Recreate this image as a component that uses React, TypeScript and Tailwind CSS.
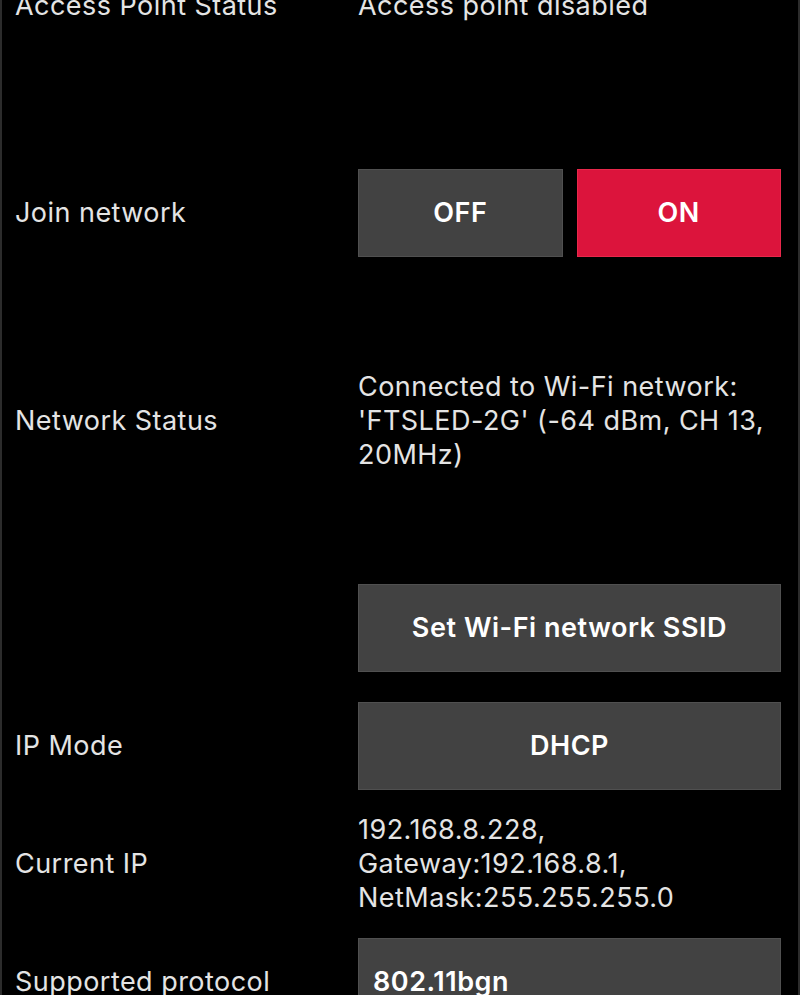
import React from "react";

const FONT = { fontFamily: "Inter, Roboto, 'Noto Sans', sans-serif" };

function Row({ label, children, tall }: { label?: string; children: React.ReactNode; tall?: boolean }) {
  return (
    <div className={`grid grid-cols-[343px_1fr] items-center py-[8px] ${tall ? "h-[297px]" : "min-h-[118px]"}`}>
      <div className="text-[27px] leading-[34px] tracking-[0.017em] text-[#e4e4e4]">{label}</div>
      <div>{children}</div>
    </div>
  );
}

function Btn({ children, red, left }: { children: React.ReactNode; red?: boolean; left?: boolean }) {
  return (
    <button
      type="button"
      className={`flex h-[88px] w-full items-center border text-[27px] font-semibold tracking-[0.02em] text-white ${
        left ? "justify-start pl-[14px]" : "justify-center"
      } ${red ? "border-[#e8284b] bg-[#dc143c]" : "border-[#505050] bg-[#424242]"}`}
    >
      {children}
    </button>
  );
}

export default function App() {
  return (
    <div className="h-[995px] w-[800px] overflow-hidden border-x-2 border-[#2c2c2c] bg-black" style={FONT}>
      <div className="-mt-[142px] pl-[13px] pr-[17px]">
        <div className="h-[296px] grid grid-cols-[343px_1fr] items-center py-[8px] text-[27px] leading-[34px] tracking-[0.017em] text-[#e4e4e4]">
          <div>Access Point Status</div>
          <div>Access point disabled</div>
        </div>

        <Row label="Join network">
          <div className="grid grid-cols-2 gap-[14px]">
            <Btn>OFF</Btn>
            <Btn red>ON</Btn>
          </div>
        </Row>

        <Row label="Network Status" tall>
          <div className="text-[27px] leading-[34px] tracking-[0.017em] text-[#e4e4e4]">
            Connected to Wi-Fi network:
            <br />
            'FTSLED-2G' (-64 dBm, CH 13,
            <br />
            20MHz)
          </div>
        </Row>

        <Row>
          <Btn>Set Wi-Fi network SSID</Btn>
        </Row>

        <Row label="IP Mode">
          <Btn>DHCP</Btn>
        </Row>

        <Row label="Current IP">
          <div className="text-[27px] leading-[34px] tracking-[0.017em] text-[#e4e4e4]">
            192.168.8.228,
            <br />
            Gateway:192.168.8.1,
            <br />
            NetMask:255.255.255.0
          </div>
        </Row>

        <Row label="Supported protocol">
          <Btn left>802.11bgn</Btn>
        </Row>
      </div>
    </div>
  );
}
